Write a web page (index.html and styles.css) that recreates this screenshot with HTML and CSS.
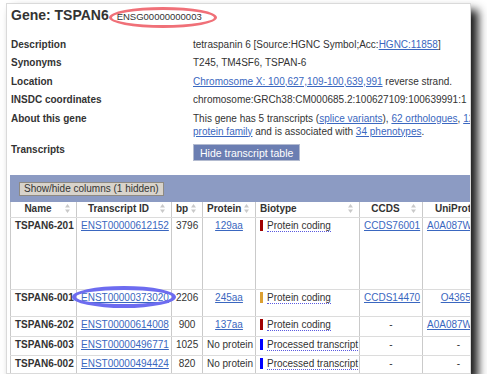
FILE: index.html
```html
<!DOCTYPE html>
<html lang="en">
<head>
    <meta charset="UTF-8">
    <title>Gene: TSPAN6</title>
    <link rel="stylesheet" href="styles.css">
</head>
<body>
    <div class="card">
        <div class="page">
            <h1 class="gene-title">Gene: TSPAN6 <span class="gene-id">ENSG00000000003</span></h1>

            <div class="summary">
                <div class="summary-row">
                    <div class="label">Description</div>
                    <div class="value">tetraspanin 6 [Source:HGNC Symbol;Acc:<a href="#">HGNC:11858</a>]</div>
                </div>
                <div class="summary-row">
                    <div class="label">Synonyms</div>
                    <div class="value">T245, TM4SF6, TSPAN-6</div>
                </div>
                <div class="summary-row">
                    <div class="label">Location</div>
                    <div class="value"><a href="#">Chromosome X: 100,627,109-100,639,991</a> reverse strand.</div>
                </div>
                <div class="summary-row">
                    <div class="label">INSDC coordinates</div>
                    <div class="value">chromosome:GRCh38:CM000685.2:100627109:100639991:1</div>
                </div>
                <div class="summary-row">
                    <div class="label">About this gene</div>
                    <div class="value">This gene has 5 transcripts (<a href="#">splice variants</a>), <a href="#">62 orthologues</a>, <a href="#">12 paralogues</a>, is a member of 1 Ensembl<br><a href="#">protein family</a> and is associated with <a href="#">34 phenotypes</a>.</div>
                </div>
                <div class="summary-row">
                    <div class="label">Transcripts</div>
                    <div class="value"><button class="btn-hide">Hide transcript table</button></div>
                </div>
            </div>

            <div class="transcripts">
                <div class="table-bar">
                    <button class="btn-columns">Show/hide columns (1 hidden)</button>
                </div>
                <table class="transcript-table">
                    <colgroup>
                        <col class="c-name"><col class="c-id"><col class="c-bp"><col class="c-protein">
                        <col class="c-biotype"><col class="c-ccds"><col class="c-uniprot"><col class="c-flags">
                    </colgroup>
                    <thead>
                        <tr>
                            <th><svg class="sort" width="5" height="9" viewBox="0 0 5 9"><path d="M2.5 0L5 3.5H0z M2.5 9L0 5.5H5z"/></svg>Name</th>
                            <th><svg class="sort" width="5" height="9" viewBox="0 0 5 9"><path d="M2.5 0L5 3.5H0z M2.5 9L0 5.5H5z"/></svg>Transcript ID</th>
                            <th><svg class="sort" width="5" height="9" viewBox="0 0 5 9"><path d="M2.5 0L5 3.5H0z M2.5 9L0 5.5H5z"/></svg>bp</th>
                            <th><svg class="sort" width="5" height="9" viewBox="0 0 5 9"><path d="M2.5 0L5 3.5H0z M2.5 9L0 5.5H5z"/></svg>Protein</th>
                            <th class="left"><svg class="sort" width="5" height="9" viewBox="0 0 5 9"><path d="M2.5 0L5 3.5H0z M2.5 9L0 5.5H5z"/></svg>Biotype</th>
                            <th><svg class="sort" width="5" height="9" viewBox="0 0 5 9"><path d="M2.5 0L5 3.5H0z M2.5 9L0 5.5H5z"/></svg>CCDS</th>
                            <th><svg class="sort" width="5" height="9" viewBox="0 0 5 9"><path d="M2.5 0L5 3.5H0z M2.5 9L0 5.5H5z"/></svg>UniProt</th>
                            <th><svg class="sort" width="5" height="9" viewBox="0 0 5 9"><path d="M2.5 0L5 3.5H0z M2.5 9L0 5.5H5z"/></svg>Flags</th>
                        </tr>
                    </thead>
                    <tbody>
                        <tr class="row-tall">
                            <td class="name">TSPAN6-201</td>
                            <td><a href="#">ENST00000612152</a></td>
                            <td class="center">3796</td>
                            <td class="center"><a href="#">129aa</a></td>
                            <td><span class="bio-bar coding"></span><span class="bio">Protein coding</span></td>
                            <td class="center"><a href="#">CCDS76001</a></td>
                            <td class="center"><a href="#">A0A087WYV6</a></td>
                            <td>TSL:5</td>
                        </tr>
                        <tr class="row-mid">
                            <td class="name">TSPAN6-001</td>
                            <td><a href="#" class="circled">ENST00000373020</a></td>
                            <td class="center">2206</td>
                            <td class="center"><a href="#">245aa</a></td>
                            <td><span class="bio-bar coding-alt"></span><span class="bio">Protein coding</span></td>
                            <td class="center"><a href="#">CCDS14470</a></td>
                            <td class="center"><a href="#">O43657</a></td>
                            <td>TSL:1</td>
                        </tr>
                        <tr class="row-plain">
                            <td class="name">TSPAN6-202</td>
                            <td><a href="#">ENST00000614008</a></td>
                            <td class="center">900</td>
                            <td class="center"><a href="#">137aa</a></td>
                            <td><span class="bio-bar coding"></span><span class="bio">Protein coding</span></td>
                            <td class="center">-</td>
                            <td class="center"><a href="#">A0A087WZU2</a></td>
                            <td>TSL:5</td>
                        </tr>
                        <tr>
                            <td class="name">TSPAN6-003</td>
                            <td><a href="#">ENST00000496771</a></td>
                            <td class="center">1025</td>
                            <td class="center">No protein</td>
                            <td><span class="bio-bar processed"></span><span class="bio">Processed transcript</span></td>
                            <td class="center">-</td>
                            <td class="center">-</td>
                            <td>TSL:3</td>
                        </tr>
                        <tr>
                            <td class="name">TSPAN6-002</td>
                            <td><a href="#">ENST00000494424</a></td>
                            <td class="center">820</td>
                            <td class="center">No protein</td>
                            <td><span class="bio-bar processed"></span><span class="bio">Processed transcript</span></td>
                            <td class="center">-</td>
                            <td class="center">-</td>
                            <td>TSL:2</td>
                        </tr>
                    </tbody>
                </table>
            </div>
        </div>
    </div>
</body>
</html>
```

FILE: styles.css
```css
body {
    margin: 0;
    background: #fff;
    font-family: "Liberation Sans", Arial, sans-serif;
    font-size: 10px;
    color: #333;
}

a {
    color: #3a67c0;
}

.card {
    width: 463px;
    height: 369px;
    margin: 3px 0 0 6px;
    border: 1px solid #dadada;
    background: #fff;
    overflow: hidden;
    box-shadow: 7px 7px 9px rgba(0, 0, 0, 0.9);
}

.page {
    width: 640px;
}

.gene-title {
    margin: 3px 0 0 4px;
    font-size: 14px;
    line-height: 17px;
    font-weight: bold;
    color: #333;
}

.gene-id {
    position: relative;
    margin-left: 4px;
    font-size: 9.5px;
    font-weight: normal;
}

/* red marker ring round the gene id */
.gene-id::after {
    content: "";
    position: absolute;
    left: -8px;
    right: -15px;
    top: -4px;
    bottom: -6px;
    border: 3px solid #f07078;
    border-radius: 50%;
}

.summary {
    margin-top: 9.5px;
}

.summary-row {
    display: flex;
    padding: 3px 0 2.5px 4px;
    line-height: 13px;
}

.label {
    width: 182px;
    flex-shrink: 0;
    font-weight: bold;
}

.value {
    white-space: nowrap;
}

.btn-hide {
    display: block;
    margin-top: 1px;
    height: 17px;
    padding: 0 6px;
    border: 1px solid #b3bbd0;
    background: #6b7eb2;
    color: #fff;
    font: 10.5px "Liberation Sans", Arial, sans-serif;
}

.transcripts {
    margin: 11.5px 0 0 3px;
}

.table-bar {
    background: #8c9bc3;
    padding: 7px 9px 6px;
}

.btn-columns {
    display: block;
    height: 14px;
    padding: 0 4px;
    border: 1px solid #8e8a83;
    background: #d8d3cb;
    color: #333;
    font: 10px/12px "Liberation Sans", Arial, sans-serif;
}

.transcript-table {
    border-collapse: collapse;
    table-layout: fixed;
    width: 604px;
}

.c-name { width: 66px; }
.c-id { width: 95px; }
.c-bp { width: 31px; }
.c-protein { width: 53px; }
.c-biotype { width: 104px; }
.c-ccds { width: 63px; }
.c-uniprot { width: 72px; }
.c-flags { width: 120px; }

.transcript-table th,
.transcript-table td {
    border-left: 1px solid #cacaca;
    border-bottom: 1px solid #dcdcdc;
    white-space: nowrap;
}

.transcript-table th {
    padding: 1px 4px 2px;
    line-height: 12px;
    font-weight: bold;
    text-align: center;
}

.transcript-table th.left {
    text-align: left;
}

.sort {
    float: right;
    margin: 1px 2px 0 4px;
    fill: #c9c9c9;
}

.transcript-table td {
    padding: 1px 4px;
    line-height: 13px;
    vertical-align: top;
}

.transcript-table tbody tr {
    height: 19px;
}

.transcript-table tr.row-tall {
    height: 72px;
}

.transcript-table tr.row-mid {
    height: 27px;
}

.transcript-table tr.row-plain {
    height: 20px;
}

.name {
    font-weight: bold;
}

.center {
    text-align: center;
}

.bio-bar {
    display: inline-block;
    width: 3px;
    height: 11px;
    margin-right: 4px;
    vertical-align: -2px;
}

.bio-bar.coding { background: #a00000; }
.bio-bar.coding-alt { background: #dca032; }
.bio-bar.processed { background: #0000ff; }

.bio {
    border-bottom: 1px dotted #5a5ae0;
}

.circled {
    position: relative;
}

/* blue marker ring round the canonical transcript */
.circled::after {
    content: "";
    position: absolute;
    left: -9px;
    right: -7px;
    top: -6px;
    bottom: -5px;
    border: 4px solid #6d6cf0;
    border-radius: 50%;
}
```
